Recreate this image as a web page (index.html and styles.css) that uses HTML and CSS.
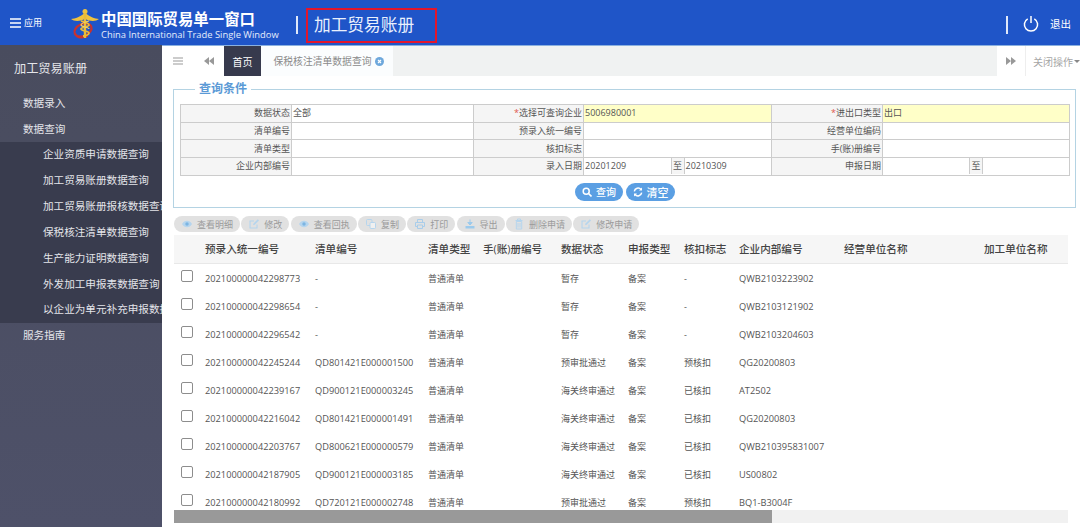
FILE: index.html
```html
<!DOCTYPE html>
<html lang="zh-CN">
<head>
<meta charset="utf-8">
<title>加工贸易账册</title>
<link rel="stylesheet" href="styles.css">
</head>
<body>
<svg class="defs" width="0" height="0" aria-hidden="true">
  <symbol id="i-eye" viewBox="0 0 12 12"><path d="M1 6c1.400-2.200 3-3.200 5-3.200S9.600 3.800 11 6c-1.400 2.200-3 3.200-5 3.200S2.400 8.200 1 6z" fill="#b5d5ee"/><circle cx="6" cy="6" r="1.700" fill="#7db5e2"/></symbol>
  <symbol id="i-edit" viewBox="0 0 12 12"><path d="M9 6.500V10H2V3h4" fill="none" stroke="#b5d5ee" stroke-width="1.100"/><path d="M5 7.200l.5-1.700L9.800 1.200l1.200 1.200-4.300 4.300z" fill="#b5d5ee"/></symbol>
  <symbol id="i-copy" viewBox="0 0 12 12"><rect x="1.500" y="1.500" width="5.500" height="6" rx="1" fill="none" stroke="#b5d5ee"/><rect x="5" y="4.500" width="5.500" height="6" rx="1" fill="#f0f0f0" stroke="#b5d5ee"/></symbol>
  <symbol id="i-print" viewBox="0 0 12 12"><path d="M3.500 4V1.500h5V4M3 8.500H1.500V4.500h9v4H9M3.500 7h5v3.500h-5z" fill="none" stroke="#a9cdea"/></symbol>
  <symbol id="i-out" viewBox="0 0 12 12"><path d="M6 1.500v5M3.800 4.500L6 7l2.200-2.500z" fill="#9ccaec" stroke="#9ccaec"/><path d="M1.500 8h9v2.500h-9z" fill="#9ccaec"/></symbol>
  <symbol id="i-del" viewBox="0 0 12 12"><path d="M2.500 2.500h7M4.500 2.500V1h3v1.500M3.300 3.500h5.400v7.500H3.300zM5 5v4.500M7 5v4.500" fill="none" stroke="#b5d5ee"/></symbol>
</svg>

<header class="topbar">
  <div class="apps">
    <svg class="burger" width="11" height="10" viewBox="0 0 11 10"><path d="M0 1h11M0 5h11M0 9h11" stroke="#fff" stroke-width="1.500"/></svg>
    <span>应用</span>
  </div>
  <svg class="logo" width="32" height="34" viewBox="0 0 32 34">
    <ellipse cx="14" cy="23" rx="9" ry="6" transform="rotate(-25 14 23)" fill="none" stroke="#c8322f" stroke-width="2.200"/>
    <path d="M6 26c1 5 7 6 13 3" fill="none" stroke="#c8322f" stroke-width="1.800"/>
    <path d="M16 6C12 9 6 12 2 12c3 2.500 9 3 14-.5 5 3.500 11 3 14 .5-4 0-10-3-14-6z" fill="#f0c23e"/>
    <circle cx="16" cy="4.500" r="2.500" fill="#f0c23e"/>
    <rect x="14.800" y="6" width="2.400" height="25" fill="#e9bb3a"/>
    <path d="M12 14c4 1 8 2 8 4s-8 2-8 4 8 2 8 4-4 3-6 3" fill="none" stroke="#e9bb3a" stroke-width="1.800"/>
    <path d="M20 14c-4 1-8 2-8 4s8 2 8 4" fill="none" stroke="#f3d264" stroke-width="1.200"/>
  </svg>
  <div class="brand">
    <strong>中国国际贸易单一窗口</strong>
    <span>China International Trade Single Window</span>
  </div>
  <i class="vbar"></i>
  <h1 class="apptitle">加工贸易账册</h1>
  <div class="top-right">
    <i class="vbar"></i>
    <svg class="power" width="16" height="17" viewBox="0 0 16 17"><path d="M4.700 3.800a6.600 6.600 0 1 0 6.600 0" fill="none" stroke="#fff" stroke-width="1.500"/><path d="M8 1v7" stroke="#fff" stroke-width="1.500"/></svg>
    <span class="logout">退出</span>
  </div>
</header>

<div class="body-wrap">
  <nav class="sidebar">
    <div class="side-title">加工贸易账册</div>
    <a class="lvl1">数据录入</a>
    <a class="lvl1">数据查询</a>
    <div class="sub">
      <a>企业资质申请数据查询</a>
      <a>加工贸易账册数据查询</a>
      <a>加工贸易账册报核数据查询</a>
      <a>保税核注清单数据查询</a>
      <a>生产能力证明数据查询</a>
      <a>外发加工申报表数据查询</a>
      <a>以企业为单元补充申报数据查询</a>
    </div>
    <a class="lvl1">服务指南</a>
  </nav>

  <main class="content">
    <div class="tabs">
      <div class="tab-tools">
        <svg width="10" height="8" viewBox="0 0 10 8"><path d="M0 1h10M0 4h10M0 7h10" stroke="#999" stroke-width="1"/></svg>
        <svg width="10" height="8" viewBox="0 0 10 8"><path d="M5 0v8L0 4zM10 0v8L5 4z" fill="#999"/></svg>
      </div>
      <div class="tab tab-home">首页</div>
      <div class="tab tab-open">保税核注清单数据查询
        <svg width="9" height="9" viewBox="0 0 9 9"><circle cx="4.500" cy="4.500" r="4.500" fill="#6ea8dc"/><path d="M3 3l3 3M6 3L3 6" stroke="#fff" stroke-width="1.200"/></svg>
      </div>
      <div class="tab-fill"></div>
      <div class="tab-next"><svg width="10" height="8" viewBox="0 0 10 8"><path d="M0 0v8l5-4zM5 0v8l5-4z" fill="#999"/></svg></div>
      <div class="tab-close">关闭操作<i class="caret"></i></div>
    </div>

    <fieldset class="query">
      <legend>查询条件</legend>
      <table class="qtable">
        <colgroup><col class="c-l1"><col class="c-v1"><col class="c-l2"><col class="c-v2"><col class="c-l3"><col></colgroup>
        <tr><th>数据状态</th><td>全部</td><th><b>*</b>选择可查询企业</th><td class="req">5006980001</td><th><b>*</b>进出口类型</th><td class="req">出口</td></tr>
        <tr><th>清单编号</th><td></td><th>预录入统一编号</th><td></td><th>经营单位编码</th><td></td></tr>
        <tr><th>清单类型</th><td></td><th>核扣标志</th><td></td><th>手(账)册编号</th><td></td></tr>
        <tr><th>企业内部编号</th><td></td><th>录入日期</th>
          <td class="range"><div class="range-in"><span>20201209</span><em>至</em><span>20210309</span></div></td>
          <th>申报日期</th>
          <td class="range"><div class="range-in"><span></span><em>至</em><span></span></div></td></tr>
      </table>
      <div class="q-actions">
        <button class="pill" type="button"><svg width="10" height="10" viewBox="0 0 10 10"><circle cx="4.200" cy="4.200" r="3" fill="none" stroke="#fff" stroke-width="1.500"/><path d="M6.500 6.500L9.500 9.500" stroke="#fff" stroke-width="1.600"/></svg>查询</button>
        <button class="pill pill-b" type="button"><svg width="10" height="10" viewBox="0 0 10 10"><path d="M1.300 4.300A3.800 3.800 0 0 1 8 2.500M8.700 5.700A3.800 3.800 0 0 1 2 7.500" fill="none" stroke="#fff" stroke-width="1.500"/><path d="M9 .5v3H6zM1 9.500v-3h3z" fill="#fff"/></svg>清空</button>
      </div>
    </fieldset>

    <div class="toolbar">
      <span class="tbtn"><svg width="12" height="12"><use href="#i-eye"/></svg>查看明细</span>
      <span class="tbtn"><svg width="12" height="12"><use href="#i-edit"/></svg>修改</span>
      <span class="tbtn"><svg width="12" height="12"><use href="#i-eye"/></svg>查看回执</span>
      <span class="tbtn"><svg width="12" height="12"><use href="#i-copy"/></svg>复制</span>
      <span class="tbtn"><svg width="12" height="12"><use href="#i-print"/></svg>打印</span>
      <span class="tbtn"><svg width="12" height="12"><use href="#i-out"/></svg>导出</span>
      <span class="tbtn"><svg width="12" height="12"><use href="#i-del"/></svg>删除申请</span>
      <span class="tbtn"><svg width="12" height="12"><use href="#i-edit"/></svg>修改申请</span>
    </div>

    <div class="grid-wrap">
      <table class="grid">
        <colgroup><col class="g0"><col class="g1"><col class="g2"><col class="g3"><col class="g4"><col class="g5"><col class="g6"><col class="g7"><col class="g8"><col class="g9"><col class="g10"></colgroup>
        <thead><tr><th></th><th>预录入统一编号</th><th>清单编号</th><th>清单类型</th><th>手(账)册编号</th><th>数据状态</th><th>申报类型</th><th>核扣标志</th><th>企业内部编号</th><th>经营单位名称</th><th>加工单位名称</th></tr></thead>
        <tbody>
          <tr><td><i class="chk"></i></td><td class="num">202100000042298773</td><td class="num">-</td><td>普通清单</td><td></td><td>暂存</td><td>备案</td><td>-</td><td class="num">QWB2103223902</td><td></td><td></td></tr>
          <tr><td><i class="chk"></i></td><td class="num">202100000042298654</td><td class="num">-</td><td>普通清单</td><td></td><td>暂存</td><td>备案</td><td>-</td><td class="num">QWB2103121902</td><td></td><td></td></tr>
          <tr><td><i class="chk"></i></td><td class="num">202100000042296542</td><td class="num">-</td><td>普通清单</td><td></td><td>暂存</td><td>备案</td><td>-</td><td class="num">QWB2103204603</td><td></td><td></td></tr>
          <tr><td><i class="chk"></i></td><td class="num">202100000042245244</td><td class="num">QD801421E000001500</td><td>普通清单</td><td></td><td>预审批通过</td><td>备案</td><td>预核扣</td><td class="num">QG20200803</td><td></td><td></td></tr>
          <tr><td><i class="chk"></i></td><td class="num">202100000042239167</td><td class="num">QD900121E000003245</td><td>普通清单</td><td></td><td>海关终审通过</td><td>备案</td><td>已核扣</td><td class="num">AT2502</td><td></td><td></td></tr>
          <tr><td><i class="chk"></i></td><td class="num">202100000042216042</td><td class="num">QD801421E000001491</td><td>普通清单</td><td></td><td>海关终审通过</td><td>备案</td><td>已核扣</td><td class="num">QG20200803</td><td></td><td></td></tr>
          <tr><td><i class="chk"></i></td><td class="num">202100000042203767</td><td class="num">QD800621E000000579</td><td>普通清单</td><td></td><td>海关终审通过</td><td>备案</td><td>已核扣</td><td class="num">QWB210395831007</td><td></td><td></td></tr>
          <tr><td><i class="chk"></i></td><td class="num">202100000042187905</td><td class="num">QD900121E000003185</td><td>普通清单</td><td></td><td>海关终审通过</td><td>备案</td><td>已核扣</td><td class="num">US00802</td><td></td><td></td></tr>
          <tr><td><i class="chk"></i></td><td class="num">202100000042180992</td><td class="num">QD720121E000002748</td><td>普通清单</td><td></td><td>预审批通过</td><td>备案</td><td>预核扣</td><td class="num">BQ1-B3004F</td><td></td><td></td></tr>
        </tbody>
      </table>
      <div class="hscroll"><div class="thumb"></div></div>
    </div>
  </main>
</div>
</body>
</html>
```

FILE: styles.css
```css
* { box-sizing: border-box; }
html, body { margin: 0; height: 527px; overflow: hidden; }
body { font-family: "Open Sans", "Noto Sans CJK SC", sans-serif; background: #fff; color: #555; }
.defs { position: absolute; }

/* top bar */
.topbar { height: 45px; background: #1f55c8; color: #fff; display: flex; align-items: center; }
.apps { display: flex; align-items: center; gap: 3px; width: 70px; padding-left: 10px; font-size: 9px; flex: none; }
.logo { flex: none; margin: 2px 0 0 -1px; }
.brand { display: flex; flex-direction: column; margin-top: 6px; width: 195px; flex: none; }
.brand strong { font-size: 15.400px; line-height: 18px; font-weight: 700; white-space: nowrap; }
.brand span { font-size: 9.400px; line-height: 12px; white-space: nowrap; color: #e4ecfb; }
.vbar { display: block; width: 2px; height: 18px; background: #dfe8fa; flex: none; margin-top: 4px; }
.apptitle { margin: 5px 0 0 8px; width: 131px; height: 35px; border: 2px solid #e3162c; font-size: 16.700px; line-height: 29px; font-weight: 400; padding-left: 6px; white-space: nowrap; color: #e9f0fd; flex: none; }
.top-right { margin-left: auto; display: flex; align-items: center; }
.power { margin: 2px 0 0 15px; }
.logout { font-size: 10.500px; margin: 2px 9px 0 11px; }

/* layout */
.body-wrap { display: flex; height: 482px; }
.sidebar { width: 162px; flex: none; background: linear-gradient(#494c5e, #4e5169); color: #e4e5ea; overflow: hidden; }
.sidebar a { display: block; white-space: nowrap; }
.side-title { font-size: 12.200px; line-height: 18px; padding: 15px 0 0 14px; height: 46px; }
.lvl1 { font-size: 10.600px; line-height: 25.500px; padding-left: 23px; }
.sub { background: #393c4e; }
.sub a { font-size: 10.600px; line-height: 25.900px; padding-left: 43px; }
.content { flex: 1; min-width: 0; overflow: hidden; display: flex; flex-direction: column; }

/* tabs */
.tabs { height: 31px; display: flex; align-items: stretch; font-size: 10px; flex: none; border-top: 1px solid #8ab0df; }
.tab-tools { width: 62px; display: flex; align-items: center; gap: 21px; padding-left: 11px; }
.tab { display: flex; align-items: center; justify-content: center; }
.tab-home { width: 37px; background: #373a4d; color: #fff; }
.tab-open { width: 132px; gap: 4px; padding-left: 4px; font-size: 9.800px; color: #8a8a8a; background: #fbfdfe; }
.tab-fill { flex: 1; background: #f0f2f2; }
.tab-next { width: 29px; display: flex; align-items: center; justify-content: center; border-right: 1px solid #eee; }
.tab-close { width: 54px; display: flex; align-items: center; padding-left: 7px; color: #a5a5a5; white-space: nowrap; }
.caret { border: 3px solid transparent; border-top-color: #888; border-bottom: 0; margin-left: 1px; }

/* query */
.query { margin: 5px 4px 0 11px; padding: 7px 6px 0; height: 127px; border: 1px solid #b4d3e3; min-width: 0; }
.query legend { margin-left: 15px; padding: 0 4px; font-size: 12px; line-height: 16px; font-weight: 700; color: #5b9ad6; }
.qtable { width: 890px; table-layout: fixed; border-collapse: collapse; font-size: 9px; }
.c-l1 { width: 111px; } .c-v1 { width: 182px; } .c-l2 { width: 110px; } .c-v2 { width: 188px; } .c-l3 { width: 111px; }
.qtable th, .qtable td { border: 1px solid #ccc; height: 17.700px; padding: 0 1px; line-height: 16px; color: #555; font-weight: 400; white-space: nowrap; overflow: hidden; }
.qtable th { background: #f5f5f5; text-align: right; }
.qtable th b { color: #e0564a; font-weight: 400; }
.qtable .req { background: #ffffc8; }
.qtable .range { padding: 0; height: 17.700px; }
.range-in { display: flex; height: 16px; }
.range-in span { flex: 1; padding-left: 1px; }
.range-in em { width: 14px; font-style: normal; text-align: center; border: solid #ccc; border-width: 0 1px; background: #f5f5f5; }
.q-actions { display: flex; justify-content: center; gap: 3px; margin-top: 7px; padding-left: 1px; }
.pill { height: 18px; width: 48px; border: 0; border-radius: 9px; background: #5b9fe3; color: #fff; font: 500 10px "Open Sans", "Noto Sans CJK SC", sans-serif; padding: 0; display: flex; align-items: center; justify-content: center; gap: 4px; }
.pill-b { width: 49px; font-size: 11px; }

/* toolbar */
.toolbar { display: flex; gap: 1.300px; margin: 8px 0 0 12px; height: 16px; flex: none; }
.tbtn { display: flex; align-items: center; gap: 4px; padding: 0 7px 0 7px; border-radius: 8px; background: #e1e1e1; color: #9a9a9a; font-size: 9px; white-space: nowrap; }

/* data grid */
.grid-wrap { margin: 3px 12px 0 12px; flex: none; height: 288px; overflow: hidden; position: relative; }
.grid { width: 1060px; table-layout: fixed; border-collapse: collapse; }
.g0 { width: 31px; } .g1 { width: 110px; } .g2 { width: 113px; } .g3 { width: 55px; } .g4 { width: 78px; } .g5 { width: 67px; } .g6 { width: 56px; } .g7 { width: 55px; } .g8 { width: 105px; } .g9 { width: 140px; }
.grid th { height: 28px; background: #f6f6f6; border-bottom: 1px solid #e8e8e8; text-align: left; font-size: 10.600px; font-weight: 500; color: #444; padding: 0; white-space: nowrap; }
.grid td { height: 28px; font-size: 9px; color: #555; padding: 2px 0 0; white-space: nowrap; }
.grid .num { font-size: 9.250px; }
.chk { display: block; width: 12px; height: 12px; margin: -4px 0 0 7px; border: 1px solid #8d8d8d; border-radius: 2px; background: #fff; }
.hscroll { position: absolute; left: 0; right: 0; top: 275px; height: 13px; background: #f1f1f1; }
.thumb { width: 598px; height: 13px; background: #999; }
```
